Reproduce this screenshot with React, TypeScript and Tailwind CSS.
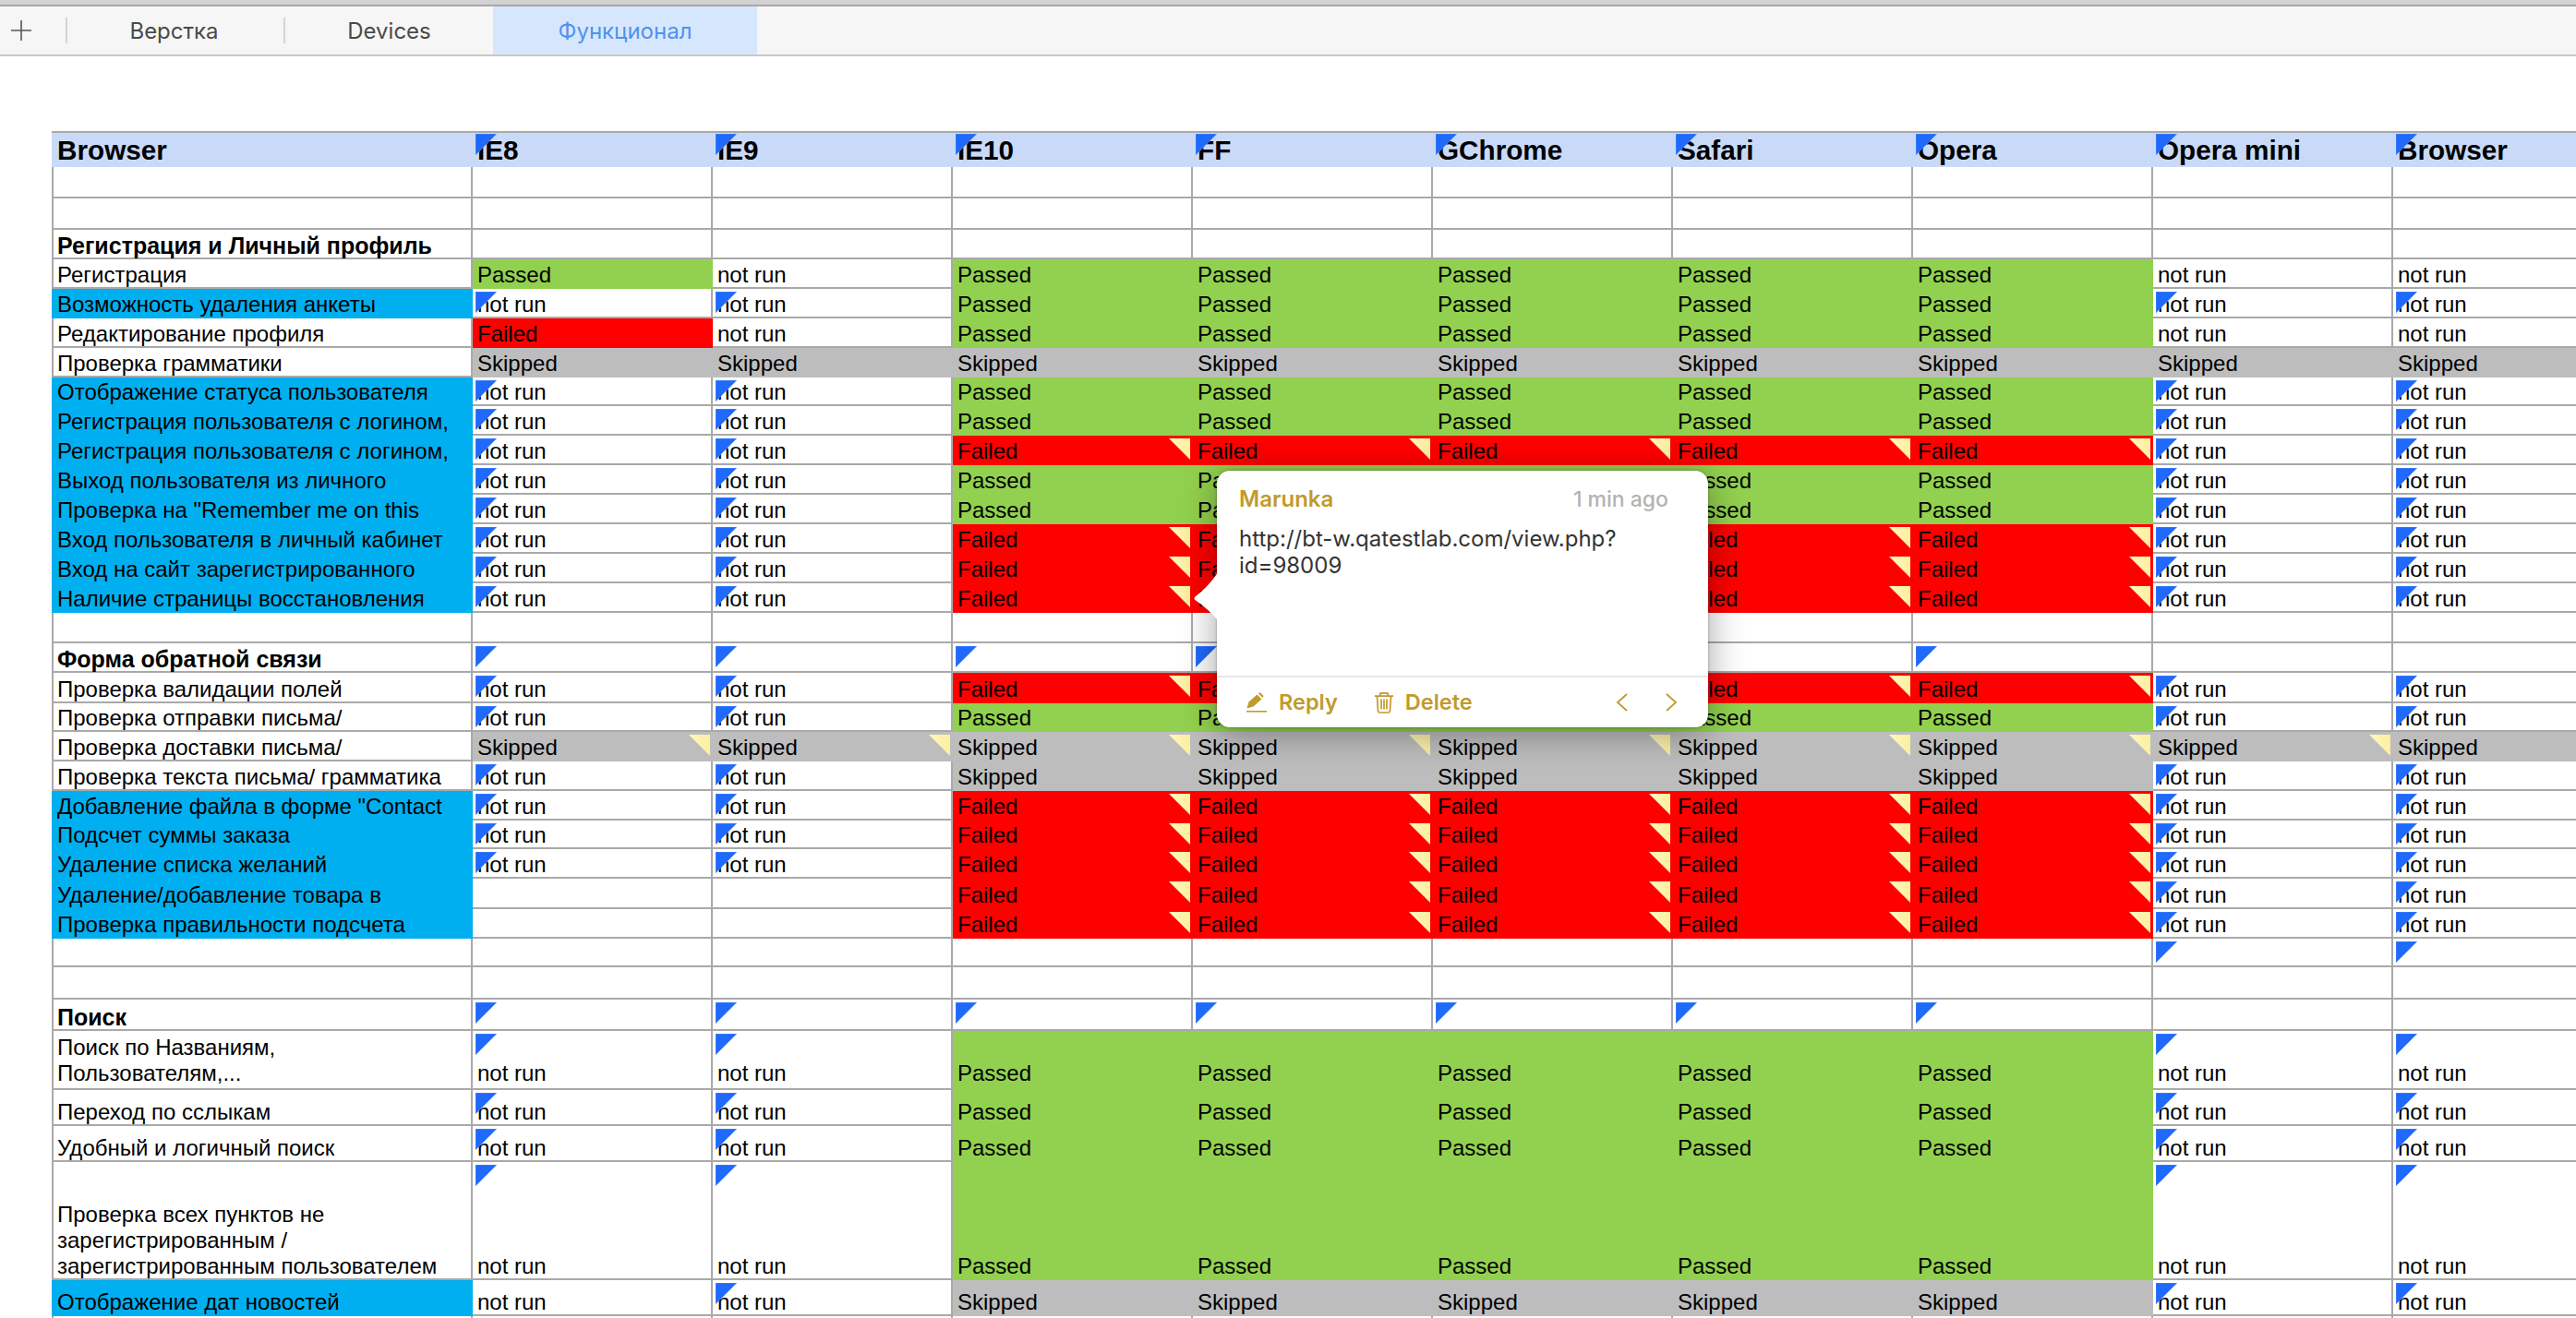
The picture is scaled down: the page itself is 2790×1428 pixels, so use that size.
import React from "react";

const BORDER = "border-[#a9a9a9]";

type CellKind = "" | "n" | "N" | "P" | "F" | "f" | "S" | "SY" | "E";
type Row = {
  h: string;
  label?: React.ReactNode;
  bold?: boolean;
  blue?: boolean;
  pad?: boolean;
  cells: CellKind[];
};

const Triangle = () => (
  <polygon points="0,0 23,0 0,23" fill="#1f69fb" stroke="#7aa5fb" strokeWidth="0.5" />
);

const BlueMark = () => (
  <svg className="absolute left-[3px] top-[3px] z-10 h-[23px] w-[23px]" viewBox="0 0 23 23">
    <Triangle />
  </svg>
);

const YellowMark = () => (
  <svg className="absolute right-[3px] top-[3px] z-10 h-[23px] w-[23px]" viewBox="0 0 23 23">
    <defs>
      <linearGradient id="yel" x1="0" y1="0" x2="1" y2="0">
        <stop offset="0" stopColor="#fff8c0" />
        <stop offset="1" stopColor="#fdef9f" />
      </linearGradient>
    </defs>
    <polygon points="0,0 23,0 23,23" fill="url(#yel)" />
  </svg>
);

const TEXT: Record<string, string> = {
  n: "not run",
  N: "not run",
  P: "Passed",
  F: "Failed",
  f: "Failed",
  S: "Skipped",
  SY: "Skipped",
};

function Cell({ kind, pad }: { kind: CellKind; pad?: boolean }) {
  const coloured = kind === "P" || kind === "F" || kind === "f" || kind === "S" || kind === "SY";
  const bg =
    kind === "P"
      ? "bg-[#92d14f]"
      : kind === "F" || kind === "f"
        ? "bg-[#ff0000]"
        : kind === "S" || kind === "SY"
          ? "bg-[#bdbdbd]"
          : `bg-white border-r-2 border-b-2 ${BORDER}`;
  const pb = coloured ? (pad ? "pb-[4px]" : "pb-px") : pad ? "pb-[2px]" : "pb-0";
  return (
    <div className={`relative flex h-full w-[260px] shrink-0 items-end pl-[5px] ${pb} ${bg}`}>
      {(kind === "N" || kind === "E") && <BlueMark />}
      {(kind === "F" || kind === "SY") && <YellowMark />}
      <span className={`whitespace-nowrap ${!coloured && !pad ? "-mb-px" : ""}`}>{TEXT[kind] ?? ""}</span>
    </div>
  );
}

const blank: CellKind[] = ["", "", "", "", "", "", "", "", ""];
const nnP: CellKind[] = ["N", "N", "P", "P", "P", "P", "P", "N", "N"];
const nnF: CellKind[] = ["N", "N", "F", "F", "F", "F", "F", "N", "N"];

const rows: Row[] = [
  { h: "h-[34px]", cells: blank },
  { h: "h-[34px]", cells: blank },
  { h: "h-[32px]", label: "Регистрация и Личный профиль", bold: true, cells: blank },
  { h: "h-[32px]", label: "Регистрация", cells: ["P", "n", "P", "P", "P", "P", "P", "n", "n"] },
  { h: "h-[32px]", label: "Возможность удаления анкеты", blue: true, cells: nnP },
  { h: "h-[32px]", label: "Редактирование профиля", cells: ["f", "n", "P", "P", "P", "P", "P", "n", "n"] },
  { h: "h-[32px]", label: "Проверка грамматики", cells: ["S", "S", "S", "S", "S", "S", "S", "S", "S"] },
  { h: "h-[31px]", label: "Отображение статуса пользователя", blue: true, cells: nnP },
  { h: "h-[32px]", label: "Регистрация пользователя с логином,", blue: true, cells: nnP },
  { h: "h-[32px]", label: "Регистрация пользователя с логином,", blue: true, cells: nnF },
  { h: "h-[32px]", label: "Выход пользователя из личного", blue: true, cells: nnP },
  { h: "h-[32px]", label: "Проверка на \"Remember me on this", blue: true, cells: nnP },
  { h: "h-[32px]", label: "Вход пользователя в личный кабинет", blue: true, cells: nnF },
  { h: "h-[32px]", label: "Вход на сайт зарегистрированного", blue: true, cells: nnF },
  { h: "h-[32px]", label: "Наличие страницы восстановления", blue: true, cells: nnF },
  { h: "h-[33px]", cells: blank },
  { h: "h-[32px]", label: "Форма обратной связи", bold: true, cells: ["E", "E", "E", "E", "E", "E", "E", "", ""] },
  { h: "h-[33px]", label: "Проверка валидации полей", cells: nnF },
  { h: "h-[31px]", label: "Проверка отправки письма/", cells: nnP },
  { h: "h-[32px]", label: "Проверка доставки письма/", cells: ["SY", "SY", "SY", "SY", "SY", "SY", "SY", "SY", "SY"] },
  { h: "h-[32px]", label: "Проверка текста письма/ грамматика", cells: ["N", "N", "S", "S", "S", "S", "S", "N", "N"] },
  { h: "h-[32px]", label: "Добавление файла в форме \"Contact", blue: true, cells: nnF },
  { h: "h-[31px]", label: "Подсчет суммы заказа", blue: true, cells: nnF },
  { h: "h-[32px]", label: "Удаление списка желаний", blue: true, cells: nnF },
  { h: "h-[33px]", label: "Удаление/добавление товара в", blue: true, cells: ["", "", "F", "F", "F", "F", "F", "N", "N"] },
  { h: "h-[32px]", label: "Проверка правильности подсчета", blue: true, cells: ["", "", "F", "F", "F", "F", "F", "N", "N"] },
  { h: "h-[31px]", cells: ["", "", "", "", "", "", "", "E", "E"] },
  { h: "h-[35px]", cells: blank },
  { h: "h-[34px]", label: "Поиск", bold: true, cells: ["E", "E", "E", "E", "E", "E", "E", "", ""] },
  { h: "h-[64px]", pad: true, label: <>Поиск по Названиям,<br />Пользователям,...</>, cells: nnP },
  { h: "h-[39px]", label: "Переход по сслыкам", cells: nnP },
  { h: "h-[39px]", label: "Удобный и логичный поиск", cells: nnP },
  { h: "h-[128px]", label: <>Проверка всех пунктов не<br />зарегистрированным /<br />зарегистрированным пользователем</>, cells: nnP },
  { h: "h-[39px]", label: "Отображение дат новостей", blue: true, cells: ["n", "N", "S", "S", "S", "S", "S", "N", "N"] },
  { h: "h-[39px]", cells: blank },
];

const headers = ["IE8", "IE9", "IE10", "FF", "GChrome", "Safari", "Opera", "Opera mini", "Browser"];

function LabelCell({ r }: { r: Row }) {
  const surface = r.blue
    ? `bg-[#00afef] pl-[6px] ${r.pad ? "pb-[4px]" : "pb-px"}`
    : `border-b-2 border-l-2 border-r-2 bg-white pl-[4px] ${BORDER} ${r.pad ? "pb-[2px]" : "pb-0"}`;
  return (
    <div
      className={`flex h-full w-[456px] shrink-0 items-end whitespace-nowrap ${surface} ${
        r.bold ? "text-[25px] font-bold" : ""
      }`}
    >
      <span className={!r.blue && !r.pad ? "-mb-px" : ""}>{r.label}</span>
    </div>
  );
}

export default function App() {
  return (
    <div className="h-[1428px] w-[2790px] overflow-hidden bg-white font-['Liberation_Sans',Arial,sans-serif] text-[24px] leading-[28px] text-black">
      <div className="relative">
        {/* tab bar */}
        <div className="h-[5px] bg-[#d2d2d2]" />
        <div className="flex h-[56px] items-stretch border-y-2 border-t-[#a8a8a8] border-b-[#c8c8c8] bg-[#f6f6f6] font-['Inter',sans-serif] text-[24px] text-[#4a4a4a]">
          <div className="flex w-[71px] items-center pl-[12px]">
            <svg className="h-[22px] w-[22px]" viewBox="0 0 22 22">
              <path d="M11 0V22M0 11H22" stroke="#555" strokeWidth="1.6" fill="none" />
            </svg>
          </div>
          <div className="my-[12px] w-[2px] bg-[#d4d4d4]" />
          <div className="flex w-[234px] items-center justify-center pr-[3px] pt-[2px]">Верстка</div>
          <div className="my-[12px] w-[2px] bg-[#d4d4d4]" />
          <div className="flex w-[225px] items-center justify-center pt-[2px]">Devices</div>
          <div className="flex w-[286px] items-center justify-center bg-[#d6e7fd] pt-[2px] text-[#4f92ee]">Функционал</div>
        </div>

        {/* sheet */}
        <div className="pl-[56px] pt-[81px]">
          <div className={`flex h-[39px] w-[2800px] border-t-2 ${BORDER} bg-[#c9daf8] text-[29.7px] font-bold`}>
            <div className="flex w-[456px] shrink-0 items-end pb-[4px] pl-[6px]">Browser</div>
            {headers.map((h) => (
              <div key={h} className="relative flex h-full w-[260px] shrink-0 items-end pb-[4px] pl-[5px]">
                <svg className="absolute left-[3px] top-[1px] z-10 h-[23px] w-[23px]" viewBox="0 0 23 23">
                  <Triangle />
                </svg>
                {h}
              </div>
            ))}
          </div>
          {rows.map((r, i) => (
            <div key={i} className={`flex w-[2800px] ${r.h}`}>
              <LabelCell r={r} />
              {r.cells.map((c, j) => (
                <Cell key={j} kind={c} pad={r.pad} />
              ))}
            </div>
          ))}
        </div>

        {/* comment popover */}
        <div className="absolute left-[1318px] top-[510px] z-20 flex h-[278px] w-[532px] flex-col rounded-[14px] bg-white font-['Inter',sans-serif] shadow-[0_0_3px_rgba(0,0,0,0.35),0_6px_40px_rgba(0,0,0,0.36)]">
          <svg className="absolute left-[-25px] top-[108px] h-[56px] w-[27px]" viewBox="0 0 27 56">
            <path d="M27 0C22 10 10 22 2 28C0 29.5 0 31 2 32.5C10 38 22 48 27 56Z" fill="white" />
          </svg>
          <div className="flex-1 pl-[24px] pt-[17px]">
            <div className="flex items-baseline justify-between pr-[43px] leading-[28px]">
              <span className="text-[24px] font-semibold text-[#c19a2b]">Marunka</span>
              <span className="text-[23px] font-medium text-[#b3b3b3]">1 min ago</span>
            </div>
            <div className="mt-[14px] text-[24px] leading-[29px] text-[#333]">
              http://bt-w.qatestlab.com/view.php?
              <br />
              id=98009
            </div>
          </div>
          <div className="flex h-[56px] items-center border-t-2 border-[#e6e6e6] pl-[32px] pr-[33px] text-[23.5px] font-semibold text-[#c19a2b]">
            <svg className="h-[22px] w-[22px]" viewBox="0 0 22 22" fill="#c19a2b">
              <path d="M0.5 17.5L2.5 10.5L11.5 2.5L16.5 7.5L7.5 15.5Z" />
              <path d="M13 1.5L14.5 0L18.5 4L17.5 6Z" />
              <rect x="0" y="20" width="22" height="1.6" />
            </svg>
            <span className="ml-[13px]">Reply</span>
            <svg className="ml-[40px] h-[23px] w-[20px]" viewBox="0 0 20 23" fill="none" stroke="#c19a2b" strokeWidth="1.7">
              <path d="M0 4.2H20M6 4.2V1.2H14V4.2M2.5 4.2L3.5 20C3.6 21.4 4.4 22 5.6 22H14.4C15.6 22 16.4 21.4 16.5 20L17.5 4.2M7 7.5V18.5M10 7.5V18.5M13 7.5V18.5" />
            </svg>
            <span className="ml-[13px]">Delete</span>
            <svg className="ml-auto h-[20px] w-[13px]" viewBox="0 0 13 20" fill="none" stroke="#c19a2b" strokeWidth="1.8">
              <path d="M12 1L2 10L12 19" />
            </svg>
            <svg className="ml-[41px] h-[20px] w-[13px]" viewBox="0 0 13 20" fill="none" stroke="#c19a2b" strokeWidth="1.8">
              <path d="M1 1L11 10L1 19" />
            </svg>
          </div>
        </div>
      </div>
    </div>
  );
}
